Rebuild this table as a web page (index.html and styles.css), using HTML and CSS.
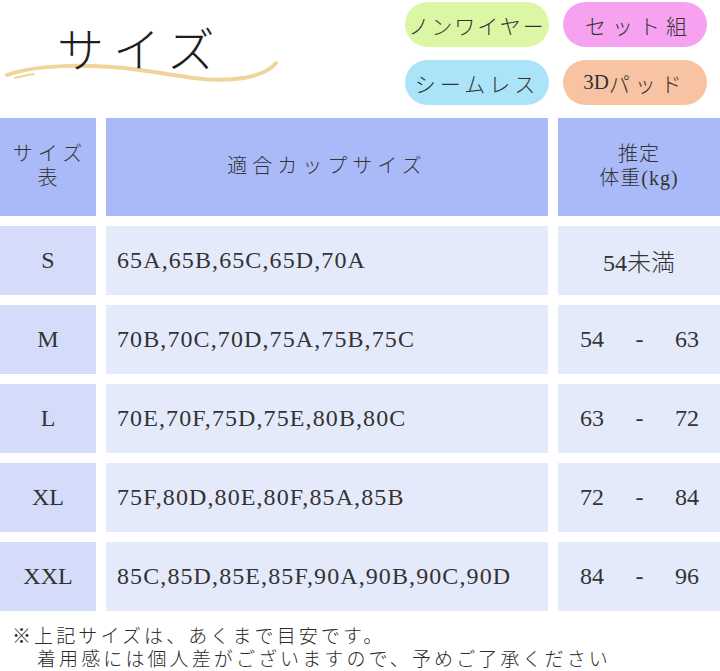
FILE: index.html
```html
<!DOCTYPE html>
<html lang="ja">
<head>
<meta charset="utf-8">
<title>サイズ</title>
<link rel="stylesheet" href="styles.css">
</head>
<body>
<div class="page">
  <header class="top">
    <div class="title">
      <svg class="swoosh" width="290" height="110" viewBox="0 0 290 110" aria-hidden="true">
        <path d="M7,75 C35,65 85,63 140,70 C185,76 205,82 235,79 C258,77 270,70 276,63" fill="none" stroke="#f1d49a" stroke-width="4" stroke-linecap="round"/>
        <path d="M15,78 C22,76 28,75 34,74" fill="none" stroke="#f1d49a" stroke-width="2" stroke-linecap="round"/>
      </svg>
      <h1 class="title-text">サイズ</h1>
    </div>
    <div class="tags">
      <span class="tag tag-green">ノンワイヤー</span>
      <span class="tag tag-pink">セット組</span>
      <span class="tag tag-blue">シームレス</span>
      <span class="tag tag-orange"><span class="tight">3D</span>パッド</span>
    </div>
  </header>

  <div class="table">
    <div class="cell head c1"><span>サイズ<br>表</span></div>
    <div class="cell head c2"><span>適合カップサイズ</span></div>
    <div class="cell head c3"><span>推定<br>体重(kg)</span></div>

    <div class="cell size">S</div>
    <div class="cell cups">65A,65B,65C,65D,70A</div>
    <div class="cell weight center">54未満</div>

    <div class="cell size">M</div>
    <div class="cell cups">70B,70C,70D,75A,75B,75C</div>
    <div class="cell weight range"><span>54</span><span>-</span><span>63</span></div>

    <div class="cell size">L</div>
    <div class="cell cups">70E,70F,75D,75E,80B,80C</div>
    <div class="cell weight range"><span>63</span><span>-</span><span>72</span></div>

    <div class="cell size">XL</div>
    <div class="cell cups">75F,80D,80E,80F,85A,85B</div>
    <div class="cell weight range"><span>72</span><span>-</span><span>84</span></div>

    <div class="cell size">XXL</div>
    <div class="cell cups">85C,85D,85E,85F,90A,90B,90C,90D</div>
    <div class="cell weight range"><span>84</span><span>-</span><span>96</span></div>
  </div>

  <footer class="note">
    <div class="note-line">※上記サイズは、あくまで目安です。</div>
    <div class="note-line indent">着用感には個人差がございますので、予めご了承ください</div>
  </footer>
</div>
</body>
</html>
```

FILE: styles.css
```css
html, body {
  margin: 0;
  padding: 0;
  background: #ffffff;
}

body {
  font-family: "Liberation Serif", "Noto Sans CJK JP", serif;
  color: #2b2b2b;
}

.page {
  width: 720px;
  height: 671px;
  overflow: hidden;
}

.top {
  height: 118px;
  display: flex;
  justify-content: space-between;
}

.title {
  position: relative;
  width: 290px;
  height: 110px;
}

.swoosh {
  position: absolute;
  left: 0;
  top: 0;
}

.title-text {
  position: relative;
  margin: 0;
  padding: 18px 0 0 57px;
  font-family: "Noto Sans CJK JP", sans-serif;
  font-weight: 300;
  font-size: 47px;
  line-height: 58px;
  letter-spacing: 9px;
  color: #1e1e1e;
}

.tags {
  display: grid;
  grid-template-columns: 144px 144px;
  grid-auto-rows: 45px;
  column-gap: 14px;
  row-gap: 13px;
  margin: 2px 13px 0 0;
}

.tag {
  display: flex;
  align-items: center;
  justify-content: center;
  border-radius: 23px;
  font-family: "Liberation Serif", "Noto Sans CJK JP", serif;
  font-weight: 300;
  font-size: 21px;
  letter-spacing: 3px;
  color: #333333;
  white-space: nowrap;
}

.tag-green { background: #dcf7a4; letter-spacing: 2px; }
.tag-pink { background: #f6a2f0; letter-spacing: 6px; padding-left: 8px; }
.tag-blue { background: #abe3f8; letter-spacing: 4px; }
.tag-orange { background: #f8c3a2; letter-spacing: 5px; }
.tight { letter-spacing: 0; }

.table {
  display: grid;
  grid-template-columns: 96px 442px 162px;
  grid-template-rows: 98px repeat(5, 69px);
  column-gap: 10px;
  row-gap: 10px;
}

.cell {
  display: flex;
  align-items: center;
  font-size: 24px;
  color: #333333;
}

.head {
  background: #aabaf8;
  justify-content: center;
  text-align: center;
  font-family: "Liberation Serif", "Noto Sans CJK JP", serif;
  font-weight: 300;
  font-size: 20px;
  line-height: 24px;
  letter-spacing: 4px;
}

.head.c1 { letter-spacing: 5px; padding-left: 4px; padding-bottom: 2px; }
.head.c2 { letter-spacing: 5px; padding-bottom: 2px; }
.head.c3 { letter-spacing: 1px; padding-bottom: 2px; }

.size {
  background: #d4dcfa;
  justify-content: center;
}

.cups {
  background: #e5eafb;
  padding-left: 11px;
  letter-spacing: 1.1px;
}

.weight {
  background: #e5eafb;
}

.center {
  justify-content: center;
  font-weight: 300;
}

.range {
  justify-content: space-between;
  padding: 0 21px 0 22px;
}

.note {
  padding: 14px 0 0 12px;
  font-family: "Liberation Serif", "Noto Sans CJK JP", serif;
  font-weight: 300;
  font-size: 19px;
  line-height: 23px;
  letter-spacing: 3.1px;
  color: #2b2b2b;
  white-space: nowrap;
}

.indent {
  padding-left: 25px;
}
```
